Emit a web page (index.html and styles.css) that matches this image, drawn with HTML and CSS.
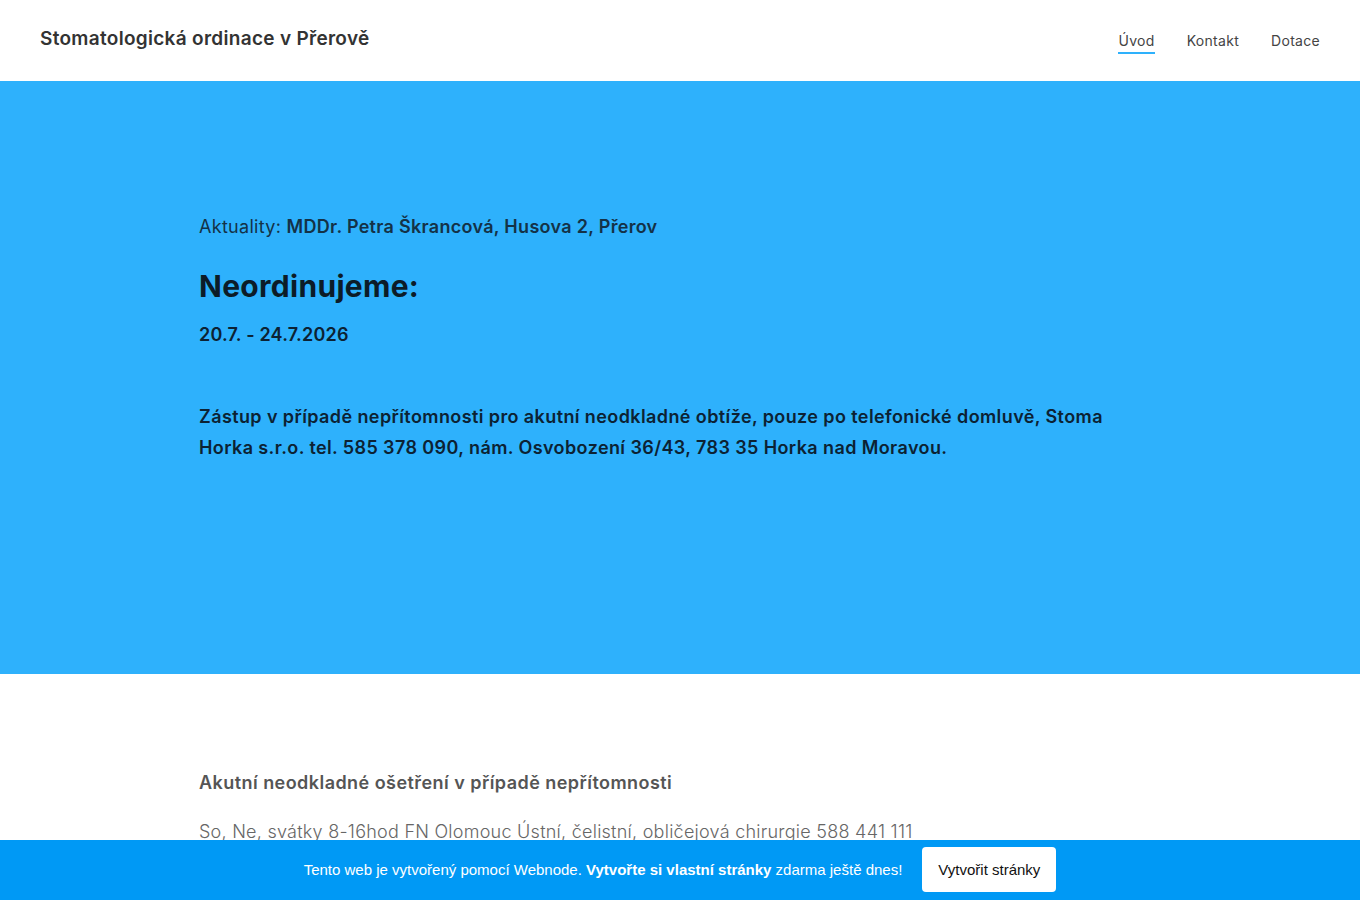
FILE: index.html
```html
<!DOCTYPE html>
<html lang="cs">
<head>
  <meta charset="UTF-8" />
  <meta name="viewport" content="width=device-width, initial-scale=1" />
  <title>Stomatologická ordinace v Přerově</title>
  <link rel="stylesheet" href="styles.css">
</head>
<body>

  <!-- Header -->
  <header class="site-header">
    <div class="logo">Stomatologická ordinace v Přerově</div>
    <nav class="menu">
      <a href="#" class="active">Úvod</a>
      <a href="#">Kontakt</a>
      <a href="#">Dotace</a>
    </nav>
  </header>

  <!-- Hero -->
  <section class="hero">
    <div class="container">
      <p class="news">Aktuality: <strong>MDDr. Petra Škrancová, Husova 2, Přerov</strong></p>
      <h1>Neordinujeme:</h1>
      <p class="dates">20.7. - 24.7.2026</p>
      <p class="substitute">Zástup v případě nepřítomnosti pro akutní neodkladné obtíže, pouze po telefonické domluvě, Stoma Horka s.r.o. tel. 585 378 090, nám. Osvobození 36/43, 783 35 Horka nad Moravou.</p>
    </div>
  </section>

  <!-- Emergency info -->
  <section class="info">
    <div class="container">
      <h2>Akutní neodkladné ošetření v případě nepřítomnosti</h2>
      <p>So, Ne, svátky 8-16hod FN Olomouc Ústní, čelistní, obličejová chirurgie 588 441 111</p>
    </div>
  </section>

  <!-- Webnode bar -->
  <div class="wn-bar">
    <span>Tento web je vytvořený pomocí Webnode. <strong>Vytvořte si vlastní stránky</strong> zdarma ještě dnes!</span>
    <a href="#" class="wn-btn">Vytvořit stránky</a>
  </div>

</body>
</html>
```

FILE: styles.css
```css
body {
  margin: 0;
  padding: 0;
  background: #fff;
  color: #333;
  font-family: Inter, "Noto Sans", sans-serif;
}

.site-header {
  height: 81px;
  display: flex;
  align-items: center;
  justify-content: space-between;
  padding: 0 40px;
}

.logo {
  font-size: 19px;
  font-weight: 600;
  letter-spacing: 0.3px;
  color: #333;
  margin-top: -4px;
}

.menu {
  display: flex;
  gap: 32px;
  margin-top: 4px;
}

.menu a {
  color: #444;
  text-decoration: none;
  font-size: 14px;
  letter-spacing: 0.3px;
  padding-bottom: 3px;
  border-bottom: 2px solid transparent;
}

.menu a.active {
  border-bottom-color: #2eb1fc;
}

.hero {
  background: #2eb1fc;
  color: #0c2233;
  height: 593px;
  padding-top: 135px;
  box-sizing: border-box;
}

.container {
  width: 962px;
  margin: 0 auto;
}

.news {
  margin: 0;
  font-size: 18px;
  letter-spacing: 0.3px;
  color: #143247;
}

.news strong {
  font-weight: 600;
}

.hero h1 {
  font-size: 30px;
  font-weight: 700;
  letter-spacing: 0.3px;
  margin: 31px 0 0;
  color: #0c1c28;
}

.dates {
  font-size: 18px;
  font-weight: 600;
  letter-spacing: 0.2px;
  margin: 20px 0 0;
}

.substitute {
  font-size: 18px;
  font-weight: 600;
  letter-spacing: 0.4px;
  line-height: 31px;
  margin: 56px 0 0;
}

.info {
  padding-top: 98px;
  height: 240px;
}

.info h2 {
  font-size: 18px;
  font-weight: 600;
  letter-spacing: 0.45px;
  color: #555;
  margin: 0;
}

.info p {
  font-size: 18px;
  letter-spacing: 0.25px;
  color: #666;
  font-weight: 300;
  margin: 28px 0 0;
}

.wn-bar {
  position: fixed;
  left: 0;
  right: 0;
  bottom: 0;
  height: 60px;
  background: #0099f5;
  display: flex;
  align-items: center;
  justify-content: center;
  gap: 20px;
  color: #fff;
  font-family: "Liberation Sans", Arial, sans-serif;
  font-size: 15px;
}

.wn-bar span {
  margin-top: -2px;
}

.wn-btn {
  background: #fff;
  color: #111;
  text-decoration: none;
  border-radius: 4px;
  padding: 14px 16px;
  margin-top: -1px;
  font-size: 15px;
}
```
